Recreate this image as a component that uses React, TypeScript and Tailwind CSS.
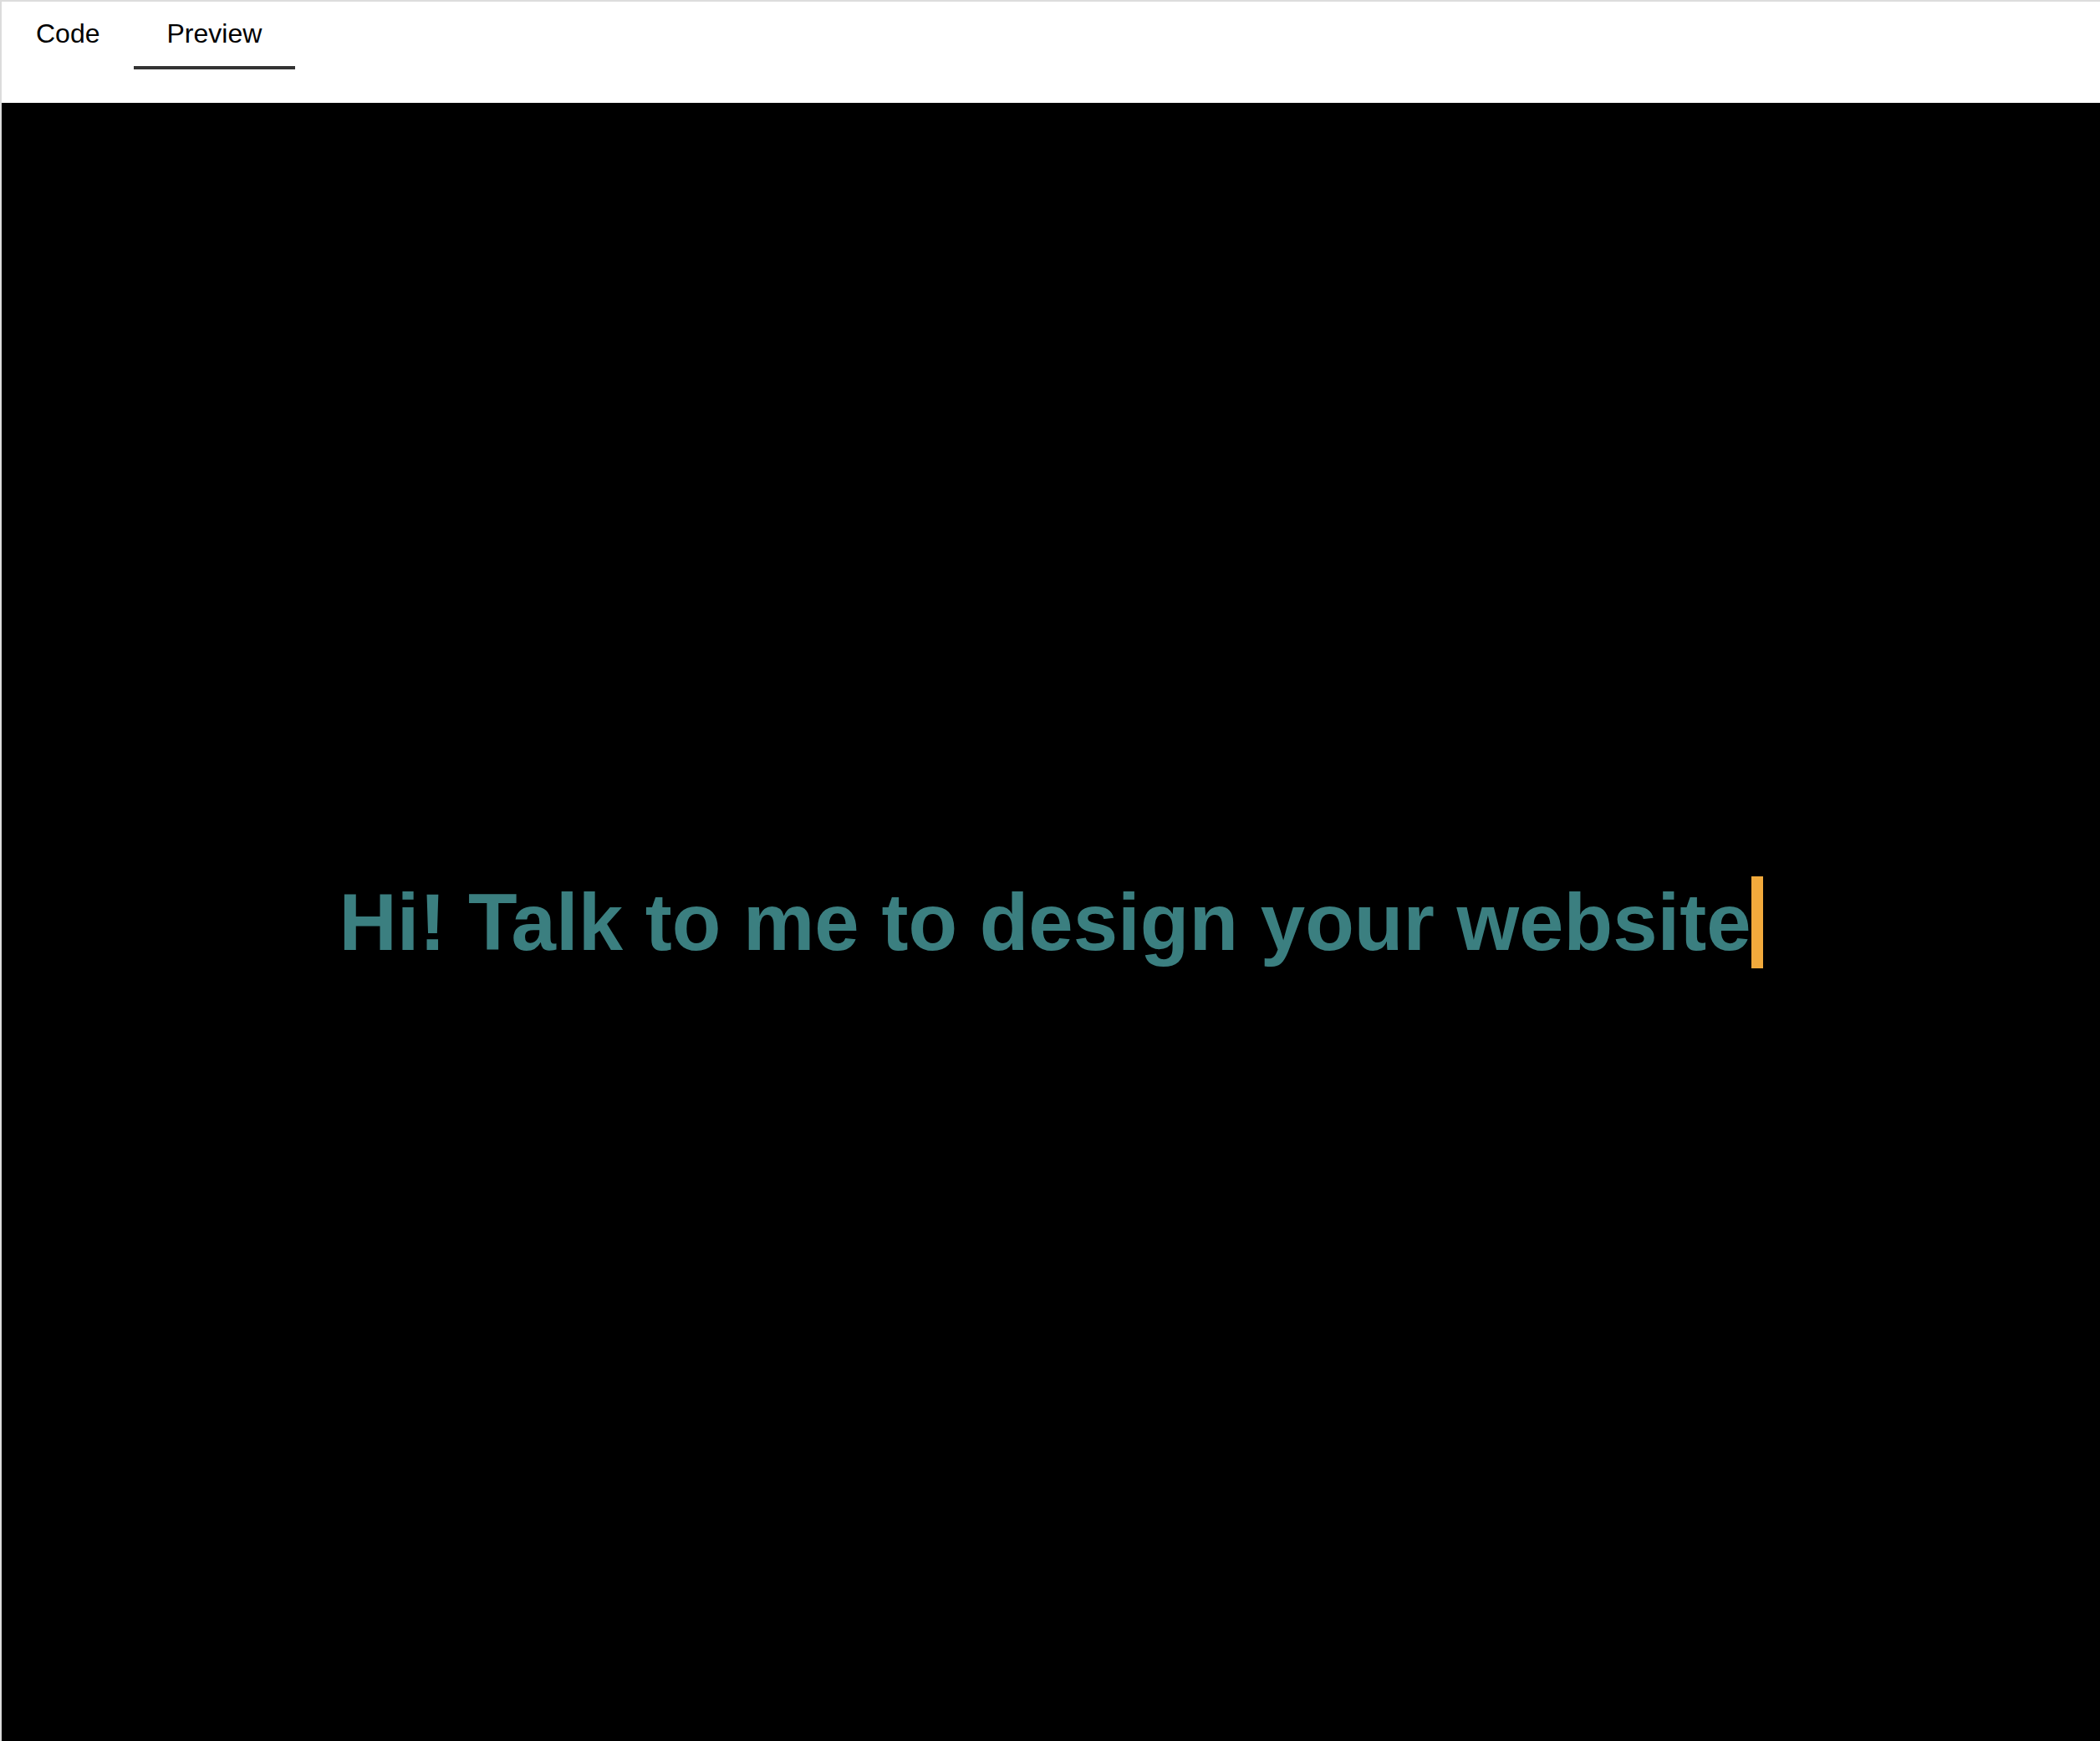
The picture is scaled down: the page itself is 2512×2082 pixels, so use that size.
import { useState } from "react";

const tabs = ["Code", "Preview"];

export default function App() {
  const [active, setActive] = useState("Preview");

  return (
    <div
      className="flex flex-col h-[2082px] w-full border-l-2 border-t-2 border-[#dcdcdc] bg-white"
      style={{ fontFamily: '"Liberation Sans", Arial, sans-serif' }}
    >
      <div className="flex h-[121px] shrink-0 items-start pl-px pt-[20px] bg-white">
        {tabs.map((t) => (
          <button
            key={t}
            onClick={() => setActive(t)}
            className={
              "px-[40px] pb-[21px] text-[32px] leading-[36px] text-black border-b-4 " +
              (active === t ? "border-[#333333]" : "border-transparent")
            }
          >
            {t}
          </button>
        ))}
      </div>
      <div className="flex flex-1 items-center justify-center bg-black">
        <h1 className="flex items-center text-[96px] font-bold leading-[110px] text-[#3b7f80]">
          Hi! Talk to me to design your website
          <span className="inline-block w-[14px] h-[110px] bg-[#f2aa3c]" />
        </h1>
      </div>
    </div>
  );
}
